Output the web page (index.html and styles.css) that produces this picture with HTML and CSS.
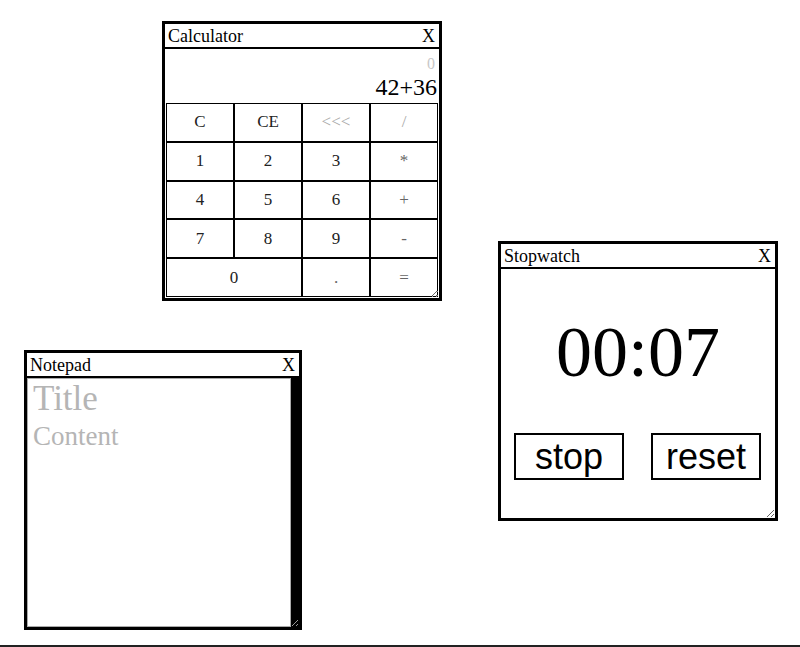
FILE: index.html
```html
<!DOCTYPE html>
<html lang="en">
<head>
<meta charset="utf-8">
<title>Desktop</title>
<link rel="stylesheet" href="styles.css">
</head>
<body>
<div class="desktop">
  <div class="window calc">
    <div class="titlebar"><span>Calculator</span><span class="close">X</span></div>
    <div class="display">
      <div class="prev">0</div>
      <div class="current">42+36</div>
    </div>
    <div class="keys">
      <button class="key">C</button>
      <button class="key">CE</button>
      <button class="key muted">&lt;&lt;&lt;</button>
      <button class="key muted">/</button>
      <button class="key">1</button>
      <button class="key">2</button>
      <button class="key">3</button>
      <button class="key op">*</button>
      <button class="key">4</button>
      <button class="key">5</button>
      <button class="key">6</button>
      <button class="key op">+</button>
      <button class="key">7</button>
      <button class="key">8</button>
      <button class="key">9</button>
      <button class="key op">-</button>
      <button class="key wide">0</button>
      <button class="key op">.</button>
      <button class="key op">=</button>
    </div>
  </div>

  <div class="window stopwatch">
    <div class="titlebar"><span>Stopwatch</span><span class="close">X</span></div>
    <div class="sw-body">
      <div class="time">00:07</div>
      <div class="sw-buttons">
        <button class="sw-btn">stop</button>
        <button class="sw-btn">reset</button>
      </div>
    </div>
  </div>

  <div class="window notepad">
    <div class="titlebar"><span>Notepad</span><span class="close">X</span></div>
    <div class="np-body">
      <div class="np-sheet">
        <input class="np-title" type="text" placeholder="Title">
        <textarea class="np-content" placeholder="Content"></textarea>
      </div>
    </div>
  </div>
</div>
</body>
</html>
```

FILE: styles.css
```css
* { box-sizing: border-box; }
html, body { margin: 0; padding: 0; background: #fff; }
body { font-family: "Liberation Serif", "Times New Roman", serif; color: #000; }

.desktop {
  position: relative;
  width: 800px;
  height: 647px;
  border-bottom: 2px solid #222;
  overflow: hidden;
}

.window {
  position: absolute;
  width: 280px;
  height: 280px;
  border: 3px solid #000;
  background: #fff;
  display: flex;
  flex-direction: column;
  resize: both;
  overflow: hidden;
}

.titlebar {
  height: 25px;
  flex: none;
  border-bottom: 2px solid #000;
  display: flex;
  justify-content: space-between;
  align-items: center;
  padding: 0 4px 0 3px;
  font-size: 18px;
  line-height: 22px;
}

/* Calculator */
.calc { left: 162px; top: 21px; }
.display {
  height: 54px;
  flex: none;
  display: flex;
  flex-direction: column;
  align-items: flex-end;
  justify-content: flex-end;
  padding: 0 2px 3px 0;
}
.prev { font-size: 16px; line-height: 20px; color: #c8c8c8; padding-right: 2px; }
.current { font-size: 24px; line-height: 26px; }

.keys {
  flex: 1;
  display: grid;
  grid-template-columns: repeat(4, 1fr);
  grid-template-rows: repeat(5, 1fr);
  padding: 0 1px 1px 1px;
}
.key {
  font-family: "Liberation Serif", "Times New Roman", serif;
  font-size: 17px;
  background: #fff;
  border: 1px solid #000;
  margin: 0;
  padding: 0;
  color: #222;
}
.key.wide { grid-column: span 2; }
.key.muted { color: #aaa; }
.key.op { color: #666; }

/* Stopwatch */
.stopwatch { left: 498px; top: 241px; }
.sw-body {
  flex: 1;
  display: flex;
  flex-direction: column;
  align-items: stretch;
  padding-top: 43px;
}
.time {
  font-size: 72px;
  line-height: 80px;
  text-align: center;
}
.sw-buttons {
  display: flex;
  justify-content: space-between;
  padding: 0 14px 0 13px;
  margin-top: 41px;
}
.sw-btn {
  width: 110px;
  height: 47px;
  border: 2px solid #000;
  background: #fff;
  font-family: "Liberation Sans", Arial, sans-serif;
  font-size: 36px;
  line-height: 40px;
  padding: 0;
  color: #000;
}

/* Notepad */
.notepad { left: 24px; top: 350px; width: 278px; }
.np-body {
  flex: 1;
  background: #000;
  display: flex;
}
.np-sheet {
  width: 264px;
  background: #fff;
  border: 1px solid #aaa;
  display: flex;
  flex-direction: column;
}
.np-title {
  height: 40px;
  border: none;
  outline: none;
  padding: 0 5px;
  font-family: "Liberation Serif", "Times New Roman", serif;
  font-size: 35px;
  background: #fff;
}
.np-content {
  flex: 1;
  border: none;
  outline: none;
  resize: none;
  padding: 2px 5px;
  font-family: "Liberation Serif", "Times New Roman", serif;
  font-size: 27px;
  background: #fff;
}
.np-title::placeholder, .np-content::placeholder { color: #b5b5b5; }
```
